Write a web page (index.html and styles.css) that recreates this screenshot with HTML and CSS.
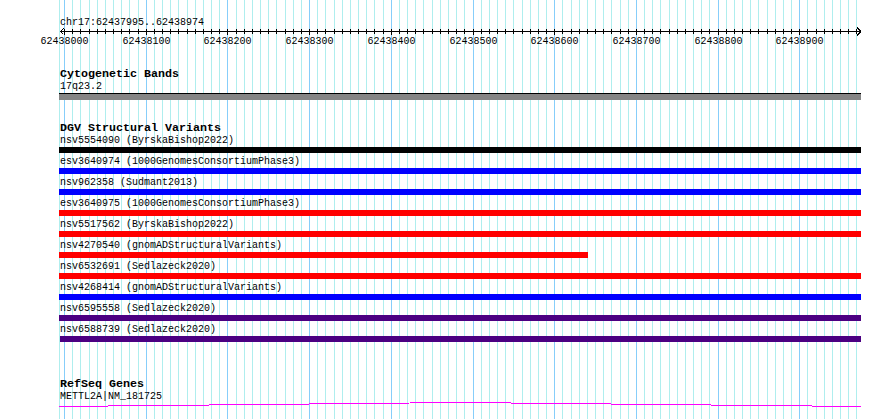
FILE: index.html
```html
<!DOCTYPE html>
<html lang="en">
<head>
    <meta charset="UTF-8">
    <meta name="viewport" content="width=device-width, initial-scale=1.0">
    <link rel="stylesheet" href="styles.css">
    <title>chr17:62437995..62438974</title>
</head>
<body>
    <div class="browser">
        <svg class="grid" id="grid" width="890" height="419"></svg>

        <div class="panel">
            <div class="ruler">
                <div class="ruler-title">chr17:62437995..62438974</div>
                <svg class="ruler-axis" id="axis" width="890" height="18"></svg>
            </div>

            <section class="track track-cyto">
                <div class="track-title">Cytogenetic Bands</div>
                <div class="feature-label">17q23.2</div>
                <div class="band"></div>
            </section>

            <section class="track track-dgv">
                <div class="track-title">DGV Structural Variants</div>
                <div class="feature">
                    <div class="feature-label">nsv5554090 (ByrskaBishop2022)</div>
                    <div class="bar bar-black"></div>
                </div>
                <div class="feature">
                    <div class="feature-label">esv3640974 (1000GenomesConsortiumPhase3)</div>
                    <div class="bar bar-blue"></div>
                </div>
                <div class="feature">
                    <div class="feature-label">nsv962358 (Sudmant2013)</div>
                    <div class="bar bar-blue"></div>
                </div>
                <div class="feature">
                    <div class="feature-label">esv3640975 (1000GenomesConsortiumPhase3)</div>
                    <div class="bar bar-red"></div>
                </div>
                <div class="feature">
                    <div class="feature-label">nsv5517562 (ByrskaBishop2022)</div>
                    <div class="bar bar-red"></div>
                </div>
                <div class="feature">
                    <div class="feature-label">nsv4270540 (gnomADStructuralVariants)</div>
                    <div class="bar bar-red" style="width: 529px"></div>
                </div>
                <div class="feature">
                    <div class="feature-label">nsv6532691 (Sedlazeck2020)</div>
                    <div class="bar bar-red"></div>
                </div>
                <div class="feature">
                    <div class="feature-label">nsv4268414 (gnomADStructuralVariants)</div>
                    <div class="bar bar-blue"></div>
                </div>
                <div class="feature">
                    <div class="feature-label">nsv6595558 (Sedlazeck2020)</div>
                    <div class="bar bar-indigo"></div>
                </div>
                <div class="feature">
                    <div class="feature-label">nsv6588739 (Sedlazeck2020)</div>
                    <div class="bar bar-indigo bar-inset"></div>
                </div>
            </section>

            <section class="track track-genes">
                <div class="track-title">RefSeq Genes</div>
                <div class="feature-label">METTL2A|NM_181725</div>
                <svg class="gene" width="802" height="8">
                    <polyline points="0,5.5 401,1.5 802,5.5" />
                </svg>
            </section>
        </div>
    </div>

    <script>
        // visible region and scale (px per bp)
        const regionStart = 62437995;
        const regionEnd = 62438974;
        const scale = 0.817;
        const NS = 'http://www.w3.org/2000/svg';

        function px(bp) {
            return Math.round(64 + (bp - 62438000) * scale);
        }

        function line(svg, x1, y1, x2, y2, cls) {
            const l = document.createElementNS(NS, 'line');
            l.setAttribute('x1', x1);
            l.setAttribute('y1', y1);
            l.setAttribute('x2', x2);
            l.setAttribute('y2', y2);
            l.setAttribute('class', cls);
            svg.appendChild(l);
        }

        // background grid, one line every 10 bp
        const grid = document.getElementById('grid');
        line(grid, 59.5, 0, 59.5, 419, 'grid-minor');
        for (let bp = 62438000; bp <= regionEnd; bp += 10) {
            const x = px(bp) + 0.5;
            line(grid, x, 0, x, 419, bp % 100 === 0 ? 'grid-major' : 'grid-minor');
        }

        // ruler: axis, ticks and numbers
        const axis = document.getElementById('axis');
        line(axis, 60, 2.5, 861, 2.5, 'axis');
        line(axis, 60.5, 2.5, 63.5, -0.5, 'axis');
        line(axis, 60.5, 2.5, 63.5, 5.5, 'axis');
        line(axis, 861, 2.5, 857, -1.5, 'axis');
        line(axis, 861, 2.5, 857, 6.5, 'axis');
        for (let bp = 62438000; bp <= regionEnd; bp += 10) {
            const x = px(bp) + 0.5;
            const major = bp % 100 === 0;
            line(axis, x, 0, x, major ? 6 : 5, 'axis');
            if (major) {
                const t = document.createElementNS(NS, 'text');
                t.setAttribute('x', x);
                t.setAttribute('y', 15);
                t.setAttribute('class', 'axis-label');
                t.textContent = bp;
                axis.appendChild(t);
            }
        }
    </script>
</body>
</html>
```

FILE: styles.css
```css
body {
    margin: 0;
    background-color: #ffffff;
    font-family: "Liberation Mono", "DejaVu Sans Mono", monospace;
    color: #000000;
}

.browser {
    position: relative;
    width: 890px;
    height: 419px;
    overflow: hidden;
}

/* grid sits behind everything */
.grid {
    position: absolute;
    top: 0;
    left: 0;
    z-index: 0;
    shape-rendering: crispEdges;
}

.grid-minor {
    stroke: #afeeee;
    stroke-width: 1;
}

.grid-major {
    stroke: #87cefa;
    stroke-width: 1;
}

.panel {
    position: relative;
    z-index: 1;
}

.ruler {
    padding-top: 16px;
}

.ruler-title {
    padding-left: 60px;
    font-size: 10px;
    line-height: 13px;
}

.ruler-axis {
    display: block;
    overflow: visible;
    shape-rendering: crispEdges;
}

.axis {
    stroke: #000000;
    stroke-width: 1;
}

.axis-label {
    font-family: "Liberation Mono", "DejaVu Sans Mono", monospace;
    font-size: 10px;
    text-anchor: middle;
    fill: #000000;
}

.track {
    margin-left: 59px;
    width: 802px;
}

.track-cyto {
    margin-top: 20px;
}

.track-dgv {
    margin-top: 21px;
}

.track-genes {
    margin-top: 35px;
}

/* titles sit one pixel lower in their 13px row */
.track-title {
    padding-top: 1px;
    padding-left: 1px;
    margin-bottom: -1px;
    font-size: 11.67px;
    font-weight: bold;
    line-height: 13px;
    white-space: nowrap;
}

.feature-label {
    padding-left: 1px;
    font-size: 10px;
    line-height: 13px;
    white-space: nowrap;
}

.band {
    height: 6px;
    border-top: 1px solid #000000;
    background-color: #858585;
}

.bar {
    width: 802px;
    height: 6px;
    margin-bottom: 2px;
}

.bar-inset {
    margin-left: 1px;
    width: 801px;
}

.bar-black {
    background-color: #000000;
}

.bar-blue {
    background-color: #0000ff;
}

.bar-red {
    background-color: #ff0000;
}

.bar-indigo {
    background-color: #4b0082;
}

.gene {
    display: block;
    margin-top: -2px;
    shape-rendering: crispEdges;
}

.gene polyline {
    fill: none;
    stroke: #ff00ff;
    stroke-width: 1;
}
```
